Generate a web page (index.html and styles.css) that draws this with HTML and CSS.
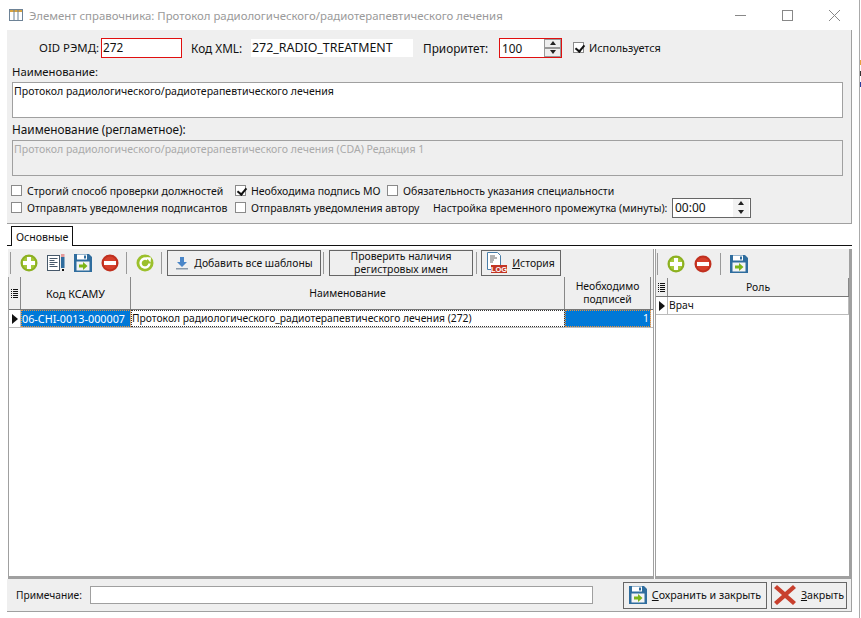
FILE: index.html
```html
<!DOCTYPE html>
<html lang="ru">
<head>
  <meta charset="UTF-8">
  <title>Элемент справочника</title>
  <link rel="stylesheet" href="styles.css">
</head>
<body>
  <svg class="defs" width="0" height="0">
    <symbol id="i-add" viewBox="0 0 18 18">
      <circle cx="9" cy="9" r="8.5" fill="#8cb021"/>
      <circle cx="9" cy="9" r="6.5" fill="#a6c93a"/>
      <path d="M7 3h4v4h4v4h-4v4H7v-4H3V7h4z" fill="#fff"/>
    </symbol>
    <symbol id="i-del" viewBox="0 0 18 18">
      <circle cx="9" cy="9" r="8.5" fill="#c0301f"/>
      <circle cx="9" cy="9" r="6.5" fill="#d6402c"/>
      <rect x="3" y="7" width="12" height="4" fill="#fff"/>
    </symbol>
    <symbol id="i-save" viewBox="0 0 18 18">
      <path d="M0 0h15l3 3v15H0z" fill="#2f6d9e"/>
      <rect x="3" y="0.5" width="10" height="5" fill="#fff"/>
      <rect x="10" y="1.5" width="2" height="3" fill="#2f6d9e"/>
      <rect x="2.5" y="7.5" width="13" height="9" fill="#f4f4f4"/>
      <path d="M5 10.5h4V8l4.5 4-4.5 4v-2.500H5z" fill="#7cb518"/>
    </symbol>
    <symbol id="i-edit" viewBox="0 0 18 18">
      <rect x="0.500" y="1.500" width="12" height="15" fill="#fff" stroke="#46586a"/>
      <path d="M2.500 4.500h8M2.500 6.500h5M2.500 8.500h8M2.500 10.500h5M2.500 12.500h8" stroke="#46586a"/>
      <rect x="14" y="0" width="3.500" height="3" fill="#e49a9a"/>
      <rect x="14" y="3" width="3.500" height="11" fill="#2f6d9e"/>
      <rect x="15" y="15" width="2" height="2" fill="#111"/>
    </symbol>
    <symbol id="i-refresh" viewBox="0 0 18 18">
      <circle cx="9" cy="9" r="8.500" fill="#9cc02c"/>
      <path d="M13.500 9.500A4.500 4.500 0 1 1 11.500 5.300" fill="none" stroke="#fff" stroke-width="2.400"/>
      <path d="M10 3l5 .5-.5 5z" fill="#fff"/>
    </symbol>
    <symbol id="i-down" viewBox="0 0 14 14">
      <path d="M5 1h4v5h3l-5 5-5-5h3z" fill="#4a86c8"/>
      <rect x="1" y="12" width="12" height="1.500" fill="#8a9aaa"/>
    </symbol>
    <symbol id="i-close" viewBox="0 0 22 22">
      <path d="M3 1l8 7 8-7 3 3-8 7 8 7-3 3-8-7-8 7-3-3 8-7-8-7z" fill="#c8402e"/>
    </symbol>
    <symbol id="i-ind" viewBox="0 0 7 9">
      <path d="M0 0h1v1H0zM2 0h5v1H2zM0 2h1v1H0zM2 2h5v1H2zM0 4h1v1H0zM2 4h5v1H2zM0 6h1v1H0zM2 6h5v1H2zM0 8h1v1H0zM2 8h5v1H2z" fill="#111"/>
    </symbol>
  </svg>

  <div class="window">
    <!-- Title bar -->
    <div class="titlebar">
      <svg class="app-icon" width="14" height="12" viewBox="0 0 14 12">
        <rect x="0.500" y="0.500" width="13" height="11" fill="#fff" stroke="#6d8296"/>
        <rect x="1" y="1" width="12" height="2" fill="#d9a441"/>
        <path d="M5 1v10M9 1v10" stroke="#6d8296"/>
      </svg>
      <span class="title">Элемент справочника: Протокол радиологического/радиотерапевтического лечения</span>
      <div class="win-controls">
        <svg width="11" height="11" viewBox="0 0 11 11"><path d="M0 5.500h11" stroke="#888"/></svg>
        <svg width="11" height="11" viewBox="0 0 11 11"><rect x="0.500" y="0.500" width="10" height="10" fill="none" stroke="#888"/></svg>
        <svg width="11" height="11" viewBox="0 0 11 11"><path d="M0 0l11 11M11 0L0 11" stroke="#888"/></svg>
      </div>
    </div>

    <!-- Main form -->
    <div class="form">
      <div class="row-top">
        <label class="lbl-oid">OID РЭМД:</label>
        <div class="input input-red input-oid">272</div>
        <label class="lbl-xml">Код XML:</label>
        <div class="input input-xml">272_RADIO_TREATMENT</div>
        <label class="lbl-prio">Приоритет:</label>
        <div class="spin">
          <span class="spin-val">100</span>
          <div class="spin-btns"><button class="up"></button><button class="down"></button></div>
        </div>
        <span class="check checked check-used"></span>
        <span class="small">Используется</span>
      </div>

      <div class="field-label">Наименование:</div>
      <div class="memo">Протокол радиологического/радиотерапевтического лечения</div>
      <div class="field-label second">Наименование (регламетное):</div>
      <div class="memo memo-off">Протокол радиологического/радиотерапевтического лечения (CDA) Редакция 1</div>

      <div class="opts">
        <div class="opt-row">
          <span class="opt opt-a"><span class="check"></span>Строгий способ проверки должностей</span>
          <span class="opt opt-b"><span class="check checked"></span>Необходима подпись МО</span>
          <span class="opt"><span class="check"></span>Обязательность указания специальности</span>
        </div>
        <div class="opt-row">
          <span class="opt opt-a"><span class="check"></span>Отправлять уведомления подписантов</span>
          <span class="opt opt-b2"><span class="check"></span>Отправлять уведомления автору</span>
          <span class="time-label">Настройка временного промежутка (минуты):</span>
          <div class="time">
            <span>00:00</span>
            <div class="time-btns"><i class="up"></i><i class="down"></i></div>
          </div>
        </div>
      </div>
    </div>

    <!-- Tabs -->
    <div class="tabs"><div class="tab">Основные</div></div>

    <!-- Left and right tables -->
    <div class="work">
      <div class="pane-left">
        <div class="toolbar">
          <span class="sep"></span>
          <svg class="tool"><use href="#i-add"/></svg>
          <svg class="tool"><use href="#i-edit"/></svg>
          <svg class="tool"><use href="#i-save"/></svg>
          <svg class="tool"><use href="#i-del"/></svg>
          <span class="sep sep-near"></span>
          <svg class="tool"><use href="#i-refresh"/></svg>
          <span class="sep sep-near"></span>
          <button class="btn btn-add"><svg width="14" height="14"><use href="#i-down"/></svg>Добавить все шаблоны</button>
          <span class="sep sep-tight"></span>
          <button class="btn btn-check">Проверить наличия<br>регистровых имен</button>
          <span class="sep sep-tight2"></span>
          <button class="btn btn-hist">
            <svg width="20" height="22" viewBox="0 0 20 22">
              <path d="M.5.5h10l3 3v14H.5z" fill="#fff" stroke="#4a7ea8"/>
              <path d="M3 4h5M3 6h7M3 8h4M3 10h3" stroke="#666"/>
              <rect x="4" y="13" width="16" height="8" fill="#c33524"/>
              <text x="12" y="20" text-anchor="middle" font-family="Liberation Sans" font-size="7.500" font-weight="700" fill="#fff">LOG</text>
            </svg>
            <span><u>И</u>стория</span>
          </button>
        </div>
        <div class="grid">
          <div class="g-head">
            <div class="gh c-ind"><svg width="7" height="9"><use href="#i-ind"/></svg></div>
            <div class="gh c-code">Код КСАМУ</div>
            <div class="gh c-name">Наименование</div>
            <div class="gh c-num">Необходимо<br>подписей</div>
          </div>
          <div class="g-row">
            <div class="gc c-ind"><span class="arrow"></span></div>
            <div class="gc c-code sel">06-CHI-0013-000007</div>
            <div class="gc c-name focus">Протокол радиологического_радиотерапевтического лечения (272)</div>
            <div class="gc c-num sel right">1</div>
          </div>
        </div>
      </div>

      <div class="pane-right">
        <div class="toolbar toolbar-right">
          <span class="sep"></span>
          <svg class="tool"><use href="#i-add"/></svg>
          <svg class="tool"><use href="#i-del"/></svg>
          <span class="sep sep-wide"></span>
          <svg class="tool"><use href="#i-save"/></svg>
        </div>
        <div class="grid grid-right">
          <div class="g-head head-right">
            <div class="gh c-ind"><svg width="7" height="9"><use href="#i-ind"/></svg></div>
            <div class="gh c-role">Роль</div>
          </div>
          <div class="g-row">
            <div class="gc c-ind"><span class="arrow"></span></div>
            <div class="gc c-role">Врач</div>
          </div>
        </div>
      </div>
    </div>

    <!-- Footer -->
    <div class="footer">
      <span class="note-label">Примечание:</span>
      <div class="note"></div>
      <button class="btn btn-save"><svg width="18" height="18"><use href="#i-save"/></svg><span><u>С</u>охранить и закрыть</span></button>
      <button class="btn btn-close"><svg width="22" height="22"><use href="#i-close"/></svg><span><u>З</u>акрыть</span></button>
    </div>
  </div>

  <!-- Edge of the window behind -->
  <div class="behind">
    <i class="b1"></i><i class="b2"></i><i class="b3"></i>
  </div>
</body>
</html>
```

FILE: styles.css
```css
/* General Reset */
* {
  margin: 0;
  padding: 0;
  box-sizing: border-box;
}

html, body {
  width: 861px;
  height: 618px;
  overflow: hidden;
}

body {
  display: flex;
  background: #fff;
  color: #111;
  font-family: 'Noto Sans', 'Liberation Sans', sans-serif;
  font-size: 11.8px;
}

.defs {
  position: absolute;
}

.window {
  width: 859px;
  height: 618px;
  padding-left: 7px;
  padding-right: 7px;
}

.behind {
  width: 2px;
  height: 618px;
  border-left: 1px solid #aaa;
  display: flex;
  flex-direction: column;
  padding-top: 60px;
  gap: 6px;
}

.behind i {
  display: block;
  height: 5px;
  width: 1px;
}

.b1 { background: #e8a33c; }
.b2 { background: #333; }
.b3 { background: #2a3f9e; }

/* Title bar */
.titlebar {
  height: 30px;
  margin-left: -7px;
  margin-right: -7px;
  display: flex;
  align-items: center;
  padding-left: 9px;
  color: #9a9a9a;
}

.app-icon {
  margin-right: 6px;
}

.title {
  font-size: 11.4px;
}

.win-controls {
  margin-left: auto;
  display: flex;
  gap: 36px;
  margin-right: 19px;
}

/* Main form */
.form {
  width: 845px;
  height: 194px;
  background: #efefef;
  border-right: 1px solid #a0a0a0;
  border-bottom: 1px solid #a0a0a0;
  padding-left: 5px;
}

.row-top {
  height: 28px;
  padding-top: 7px;
  display: flex;
  align-items: center;
}

label {
  white-space: nowrap;
}

.lbl-oid { margin-left: 27px; width: 62px; font-size: 11.4px; }
.lbl-xml { margin-left: 9px; width: 60px; }
.lbl-prio { margin-left: 10px; width: 76px; }

.input {
  height: 20px;
  background: #fff;
  padding-left: 1px;
  line-height: 17px;
}

.input-red {
  border: 1px solid #e01010;
}

.input-oid { width: 81px; }
.input-xml { width: 162px; height: 18px; font-size: 12.4px; }

.spin {
  width: 63px;
  height: 20px;
  background: #fff;
  border: 1px solid #e01010;
  display: flex;
  justify-content: space-between;
  line-height: 18px;
  padding-left: 2px;
}

.spin-btns {
  width: 17px;
  display: flex;
  flex-direction: column;
}

.spin-btns button {
  flex: 1;
  border: 1px solid #999;
  background: #eee;
  position: relative;
}

.up::after, .down::after {
  content: '';
  position: absolute;
  left: 50%;
  top: 50%;
  margin-left: -3px;
  margin-top: -2px;
  border-left: 3px solid transparent;
  border-right: 3px solid transparent;
}

.up::after { border-bottom: 4px solid #222; }
.down::after { border-top: 4px solid #222; }

.check {
  display: inline-block;
  flex: none;
  width: 11px;
  height: 11px;
  border: 1px solid #8a8a8a;
  background: #fff;
  position: relative;
  margin-right: 5px;
}

.checked::after {
  content: '';
  position: absolute;
  left: 3px;
  top: 0;
  width: 4px;
  height: 7px;
  border-right: 2px solid #111;
  border-bottom: 2px solid #111;
  transform: rotate(40deg);
}

.check-used {
  margin-left: 11px;
}

.small {
  font-size: 10.9px;
}

.field-label {
  margin-top: 7px;
  height: 14px;
  line-height: 14px;
  font-size: 11.3px;
}

.field-label.second {
  margin-top: 3px;
  height: 17px;
  line-height: 17px;
  font-size: 11.8px;
}

.memo {
  width: 831px;
  height: 36px;
  margin-top: 3px;
  border: 1px solid #a0a0a0;
  background: #fff;
  font-size: 10.56px;
  line-height: 14px;
  padding: 1px;
}

.memo-off {
  margin-top: 2px;
  background: #efefef;
  color: #aaa;
}

.opts {
  margin-top: 6px;
  font-size: 10.5px;
}

.opt-row {
  display: flex;
  align-items: center;
  height: 17px;
}

.opt {
  display: flex;
  align-items: center;
  white-space: nowrap;
  margin-left: -1px;
}

.opt-a { width: 225px; }
.opt-b { width: 153px; }
.opt-b2 { width: 198px; }

.time-label {
  width: 239px;
  white-space: nowrap;
}

.time {
  width: 79px;
  height: 20px;
  background: #fff;
  border: 1px solid #666;
  font-size: 12px;
  line-height: 18px;
  padding-left: 2px;
  display: flex;
  justify-content: space-between;
}

.time-btns {
  width: 16px;
  margin-right: 1px;
  display: flex;
  flex-direction: column;
}

.time-btns i {
  flex: 1;
  position: relative;
  background: #f2f2f2;
}

/* Tabs */
.tabs {
  height: 22px;
  width: 845px;
  border-bottom: 1px solid #111;
  padding-top: 2px;
  padding-left: 4px;
}

.tab {
  width: 62px;
  height: 20px;
  background: #fff;
  border: 1px solid #111;
  border-bottom: none;
  font-size: 10.6px;
  line-height: 20px;
  padding-left: 4px;
}

/* Tables */
.work {
  display: flex;
  width: 845px;
  height: 333px;
  padding-top: 3px;
  padding-left: 1px;
}

.pane-left {
  width: 646px;
  border-right: 1px solid #a0a0a0;
  border-bottom: 3px solid #a0a0a0;
  display: flex;
  flex-direction: column;
}

.pane-right {
  flex: 1;
  margin-left: 1px;
  border-left: 1px solid #a0a0a0;
  display: flex;
  flex-direction: column;
  border-right: 3px solid #a0a0a0;
  border-bottom: 3px solid #a0a0a0;
}

.toolbar {
  height: 28px;
  background: #efefef;
  display: flex;
  align-items: center;
  padding-left: 2px;
  flex: none;
}

.toolbar-right {
  height: 29px;
  padding-left: 1px;
}

.sep {
  width: 1px;
  height: 22px;
  background: #999;
  flex: none;
}

.sep-near { margin-left: 7px; }
.sep-wide { margin-left: 8px; }
.sep-tight { margin: 0 5px 0 2px; }
.sep-tight2 { margin: 0 4px 0 3px; }

.tool {
  width: 18px;
  height: 18px;
  flex: none;
  margin-left: 9px;
}

.btn {
  font-family: inherit;
  font-size: 10.4px;
  color: #111;
  background: #efefef;
  border: 1px solid #666;
  display: flex;
  align-items: center;
  justify-content: center;
  gap: 5px;
  flex: none;
}

.btn-add { width: 154px; height: 26px; margin-left: 5px; }
.btn-check { width: 144px; height: 26px; line-height: 13px; }
.btn-hist { width: 80px; height: 26px; }

/* Grid */
.grid {
  flex: 1;
  background: #fff;
  border-left: 1px solid #a0a0a0;
}

.grid-right {
  border-left: none;
}

.g-head {
  display: flex;
  height: 33px;
  background: #efefef;
  border-bottom: 1px solid #777;
}

.head-right {
  height: 19px;
}

.gh {
  display: flex;
  align-items: center;
  justify-content: center;
  text-align: center;
  font-size: 10.4px;
  line-height: 13px;
  border-right: 1px solid #888;
}

.g-row {
  display: flex;
  height: 18px;
  border-bottom: 1px solid #bbb;
  font-size: 10.3px;
}

.gc {
  line-height: 17px;
  padding-left: 1px;
  border-right: 1px solid #bbb;
  white-space: nowrap;
  overflow: hidden;
}

.c-ind {
  width: 12px;
  flex: none;
  display: flex;
  align-items: center;
  justify-content: center;
}

.c-code { width: 110px; flex: none; font-size: 10.8px; }
.c-name { width: 434px; flex: none; }
.c-num { width: 86px; flex: none; }
.c-role { flex: 1; }

.sel {
  background: #0078d7;
  color: #fff;
  outline: 1px dotted #e8913a;
  outline-offset: -1px;
}

.focus {
  outline: 1px dotted #333;
  outline-offset: -1px;
}

.right {
  text-align: right;
  padding-right: 1px;
}

.arrow {
  display: block;
  border-left: 6px solid #111;
  border-top: 5px solid transparent;
  border-bottom: 5px solid transparent;
}

/* Footer */
.footer {
  width: 845px;
  height: 33px;
  background: #efefef;
  border-right: 1px solid #a0a0a0;
  border-bottom: 1px solid #a0a0a0;
  display: flex;
  align-items: center;
  font-size: 10.2px;
}

.note-label {
  margin-left: 9px;
  width: 74px;
}

.note {
  width: 503px;
  height: 18px;
  background: #fff;
  border: 1px solid #a0a0a0;
  margin-right: 30px;
}

.btn-save { width: 144px; height: 27px; margin-right: 4px; font-size: 10.7px; }
.btn-close { width: 76px; height: 27px; font-size: 10.7px; }
```
